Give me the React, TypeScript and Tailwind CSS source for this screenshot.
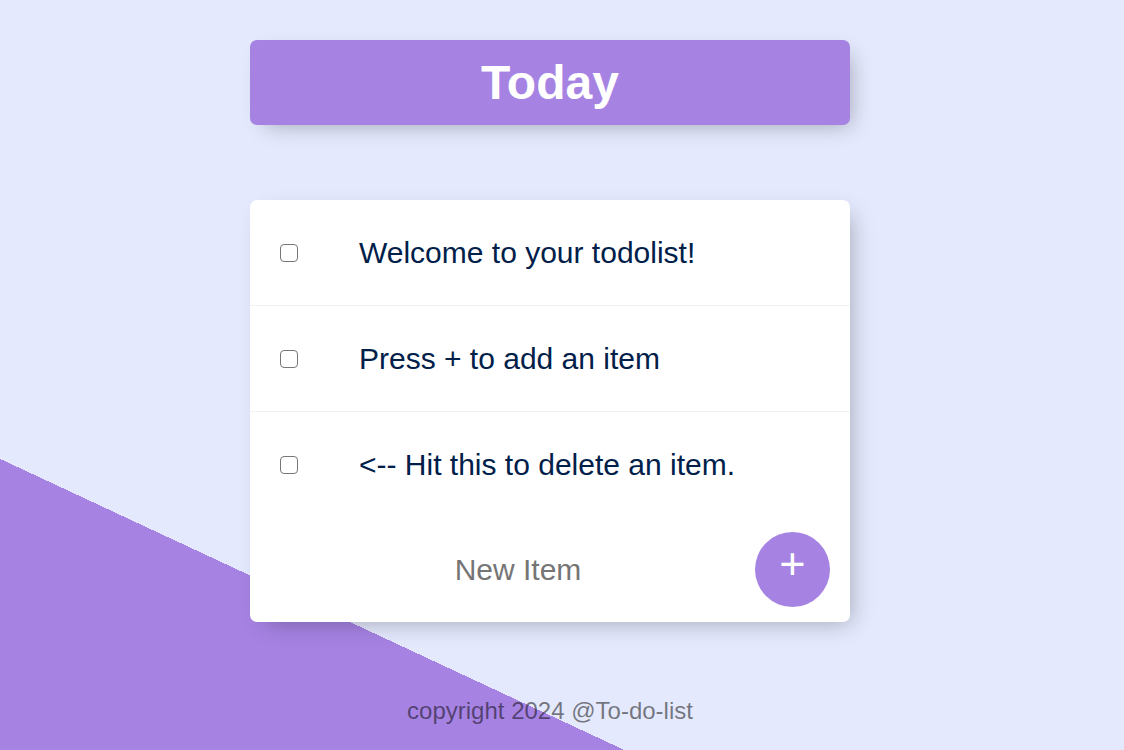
import React from "react";

const items = [
  "Welcome to your todolist!",
  "Press + to add an item",
  "<-- Hit this to delete an item.",
];

export default function App() {
  return (
    <div
      className="w-full h-[750px] overflow-hidden bg-[#e4e9fd] bg-[linear-gradient(25deg,#a683e3_22.85%,#e4e9fd_22.85%)]"
      style={{ fontFamily: '"Liberation Sans", Arial, sans-serif' }}
    >
      <div className="w-[1100px] flex flex-col items-center">
        <div className="mt-[40px] w-[600px] h-[85px] rounded-[7px] bg-[#a683e3] shadow-[7.5px_7.5px_22.5px_-7.5px_rgba(0,0,0,0.3)] flex items-center justify-center">
          <h1 className="text-[48px] leading-[55px] font-bold text-white">Today</h1>
        </div>

        <div className="mt-[75px] w-[600px] rounded-[7px] bg-white shadow-[7.5px_7.5px_22.5px_-7.5px_rgba(0,0,0,0.3)]">
          {items.map((t, i) => (
            <div
              key={i}
              className={
                i < 2
                  ? "h-[106px] flex items-center border-b-[1.5px] border-[#f1f1f1]"
                  : "h-[105px] flex items-center"
              }
            >
              <span className="ml-[30px] w-[18px] h-[18px] rounded-[4px] border-[1.5px] border-[#767676] bg-white shrink-0" />
              <p className="ml-[61px] text-[30px] leading-[34px] text-[#00204a]">{t}</p>
            </div>
          ))}
          <div className="h-[105px] flex items-center">
            <div className="ml-[33px] w-[470px] text-center text-[30px] leading-[34px] text-[#757575]">
              New Item
            </div>
            <div className="ml-[2px] w-[75px] h-[75px] rounded-full bg-[#a683e3] text-white text-[45px] leading-none flex items-center justify-center pb-[12px]">
              +
            </div>
          </div>
        </div>

        <footer className="mt-[75px] text-[24px] leading-[28px] text-black/50">
          copyright 2024 @To-do-list
        </footer>
      </div>
    </div>
  );
}
